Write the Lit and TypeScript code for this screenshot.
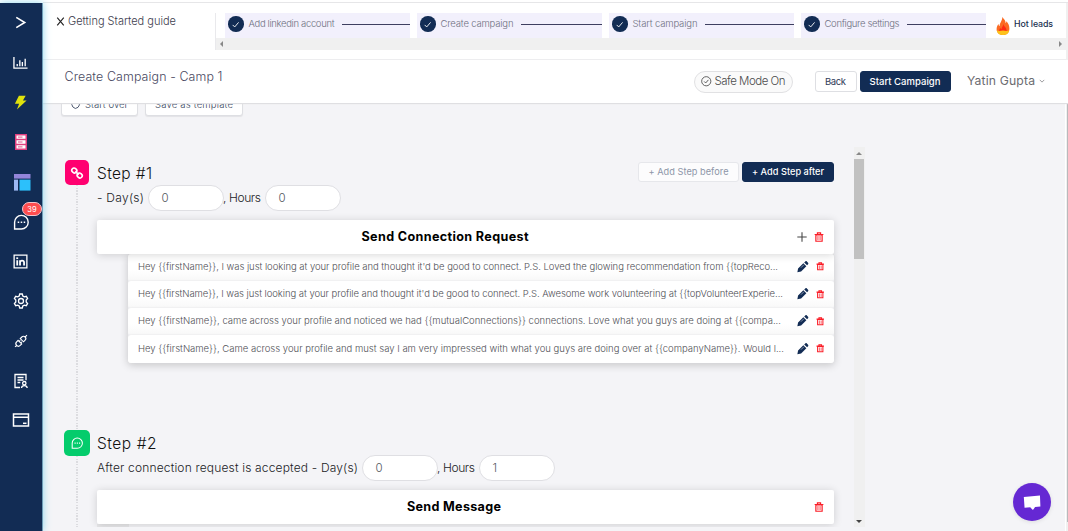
import { LitElement, html, css, svg } from "lit";
import { customElement, property, query } from "lit/decorators.js";

/** One line of text that is tracked in or out to fill a given width. */
@customElement("fit-text")
class FitText extends LitElement {
  static styles = css`
    :host { display: inline-block; flex: none; white-space: pre; line-height: 1; }
    .line { display: inline-block; }
  `;
  @property() text = "";
  @property({ type: Number }) w = 0;
  @query(".line") line!: HTMLElement;

  updated() {
    this.line.style.letterSpacing = "0";
    const natural = this.line.getBoundingClientRect().width;
    const gaps = Math.max(1, this.text.length - 1);
    const tracking = (this.w - natural) / gaps;
    this.line.style.letterSpacing = `${tracking}px`;
    this.line.style.marginRight = `${-tracking}px`;
    this.style.width = `${this.w}px`;
  }

  render() {
    return html`<span class="line">${this.text}</span>`;
  }
}

const t = (text: string, w: number) => html`<fit-text .text=${text} .w=${w}></fit-text>`;

const icons = {
  expand: svg`<path d="M3.500 2.500 12.500 8l-9 5.500" stroke-width="1.700"/>`,
  chart: svg`<path d="M1 2v12h14.5M4.5 12V9.5M7.3 12V5.5M10 12V7.500M13 12V4" stroke-width="1.4"/>`,
  bolt: svg`<path d="M6.300.8h7.2L10.600 5.800h3.900L4.200 15.500 6.500 9.400H2z" fill="#dfe20c" stroke="none"/>`,
  server: svg`<path d="M2 0h12v16H2z" fill="#e0407f" stroke="none"/><path d="M3.500 1.400h9v3.400h-9zM3.500 6.300h9v3.400h-9zM3.500 11.200h9v3.400h-9z" fill="#fff" stroke="none"/><path d="M5 3.100h4.500M5 8h4.500M5 12.900h4.500" stroke="#e0407f" stroke-width=".9"/>`,
  board: svg`<path d="M0 0h16.500v4.600H0z" fill="#9385d9" stroke="none"/><path d="M0 5.600h4v11H0z" fill="#9db9f5" stroke="none"/><path d="M5.500 5.600h11v11h-11z" fill="#2cc0fb" stroke="none"/>`,
  chat: svg`<path d="M1.600 15V8.300A6.800 6.800 0 1 1 8.400 15z" stroke-width="1.400"/><path d="M4.700 8.200h1.500M7.700 8.200h1.500M10.700 8.200h1.500" stroke-width="1.500"/>`,
  linkedin: svg`<path d="M1.200 1.200h13.600v13.600H1.200z" stroke-width="1.400"/><path d="M4.500 6.700v5.600M7.500 12.300V6.700M7.500 9c0-2.600 4.300-2.800 4.300 0v3.300" stroke-width="1.900"/><path d="M3.500 3.600h2v1.800h-2z" fill="currentColor" stroke="none"/>`,
  gear: svg`<path d="M6.700 1h2.600l.5 2 1.500.9 2-.6 1.300 2.200-1.400 1.500v2l1.400 1.500-1.300 2.200-2-.6-1.500.9-.5 2H6.700l-.5-2-1.500-.9-2 .6-1.300-2.200L2.800 9V7L1.400 5.500l1.300-2.200 2 .6L6.200 3z" stroke-width="1.300"/><circle cx="8" cy="8" r="2.500" stroke-width="1.300"/>`,
  plug: svg`<path d="m7.200 5.200 3.700 3.700 1.800-1.800a2.600 2.600 0 0 0-3.700-3.700zM4.700 7.200l4.100 4.100-1.700 1.700a2.800 2.800 0 0 1-4.100-4zM12.800 3.200l2-2M1.200 14.800l1.900-1.900M6 8.500l1.200-1.200M7.800 10.200 9 9" stroke-width="1.300"/>`,
  profile: svg`<path d="M7 14.500H2V1.500h11v5.700M4.500 4.500h6M4.500 7h6M4.500 9.500h2.800M8.500 15c.2-3.200 5.500-3.200 5.700 0" stroke-width="1.300"/><circle cx="11.300" cy="10.200" r="1.700" stroke-width="1.300"/>`,
  card: svg`<path d="M.5 2h15v12H.5zM.5 5.300h15" stroke-width="1.500"/><path d="M10 11.300h3.500" stroke-width="1.500"/>`,
  check: svg`<path d="m4.500 8.500 2.500 2.500 4.800-5.600" stroke-width="1.100"/>`,
  safe: svg`<circle cx="8" cy="8" r="7" stroke-width="1.300"/><path d="m4.800 8.300 2.300 2.300 4.300-4.800" stroke-width="1.400"/>`,
  down: svg`<path d="m2 5 6 6 6-6" stroke-width="1.800"/>`,
  close: svg`<path d="m2.200 1 11.600 14M13.800 1 2.200 15" stroke-width="2"/>`,
  reload: svg`<path d="M4 3.200A6.500 6.500 0 1 0 13 3.800M4.500.500v3.500H1" stroke-width="1.500"/>`,
  link: svg`<g stroke-width="2.100" transform="rotate(43 8 8)"><rect x="-.4" y="5" width="7" height="6" rx="3"/><rect x="9.400" y="5" width="7" height="6" rx="3"/><path d="M4.800 8h6.400"/></g>`,
  plus: svg`<path d="M8 .5v15M.5 8h15" stroke-width="1.700"/>`,
  trash: svg`<path d="M3 4.500h10v10.300H3zM1 4h14M5.500 3.500V1.300h5v2.200" stroke-width="1.900"/><path d="M6.300 6.500v6.500M9.700 6.500v6.500" stroke-width="1.300"/>`,
  pencil: svg`<path d="M.5 15.500l1-5.200 7.300-7.300 4.200 4.200-7.300 7.300zM10 2l1.600-1.400c.6-.6 1.500-.6 2.100 0l1.700 1.700c.6.600.6 1.500 0 2.100L14 6z" fill="currentColor" stroke="none"/><path d="m5.500 9.300 4-4" stroke="#dfe4ee" stroke-width=".8"/>`,
  speech: svg`<path d="M.3 1.800 15.500.500l.4 10.300-5 .4-2 3-2.600-2.600-5.300.4z" fill="#fff" stroke="none"/>`,
};

const icon = (name: keyof typeof icons, cls = "") =>
  html`<svg class="ico ${cls}" viewBox="0 0 16 16" fill="none" stroke="currentColor">${icons[name]}</svg>`;

const flame = html`<svg class="flame" viewBox="0 0 14 18">
  <path d="M6.300 0c2 2.400 3.400 3.700 3.300 6.300.6-.6.8-1.200.8-2C12.500 6.500 13.500 9 13.400 12c-.2 3.800-2.900 6-6.400 6S.6 15.800.6 12.300c0-2.400.8-3.900 2-5.300 0 1.200.3 1.800 1 2.200C3.600 5.500 6.500 3.800 6.300 0z" fill="#fb6a22"/>
  <path d="M7.300 7c.6 2.500 3.300 3.500 3.300 6.800 0 2.700-1.600 4.200-3.600 4.200s-3.800-1.500-3.800-4c0-1.500.5-2.300 1.300-3.300.2 1 .6 1.300 1 1.500C5.500 10 7.300 9.500 7.300 7z" fill="#ff2a12"/>
  <path d="M.8 13.200c2 1.400 4 .2 6.200.2s4 1.200 6.200-.2C12.800 16.500 10.300 18 7 18s-5.800-1.500-6.200-4.800z" fill="#fdc21c"/>
</svg>`;

interface Step {
  label: string; labelW: number; cls: string; icon: keyof typeof icons;
  days: string; daysW: number; d: string; h: string;
  title: string; titleW: number; messages: [string, number][]; actions: boolean;
}

const STEPS: Step[] = [
  {
    label: "Step #1", labelW: 55, cls: "first", icon: "link",
    days: "- Day(s)", daysW: 47, d: "0", h: "0",
    title: "Send Connection Request", titleW: 167, actions: true,
    messages: [
      ["Hey {{firstName}}, I was just looking at your profile and thought it'd be good to connect. P.S. Loved the glowing recommendation from {{topReco...", 640],
      ["Hey {{firstName}}, I was just looking at your profile and thought it'd be good to connect. P.S. Awesome work volunteering at {{topVolunteerExperie...", 645],
      ["Hey {{firstName}}, came across your profile and noticed we had {{mutualConnections}} connections. Love what you guys are doing at {{compa...", 643],
      ["Hey {{firstName}}, Came across your profile and must say I am very impressed with what you guys are doing over at {{companyName}}. Would l...", 646],
    ],
  },
  {
    label: "Step #2", labelW: 59.5, cls: "second", icon: "chat",
    days: "After connection request is accepted - Day(s)", daysW: 261, d: "0", h: "1",
    title: "Send Message", titleW: 94, actions: false, messages: [],
  },
];

@customElement("app-root")
class AppRoot extends LitElement {
  static styles = css`
    :host { display: block; width: 1068px; height: 531px; overflow: hidden; position: relative;
      font-family: Inter, "Open Sans", sans-serif; font-weight: 300; color: #2b2f3a; background: #fff; }
    * { box-sizing: border-box; }
    .ico { display: block; flex: none; width: 14px; height: 14px; overflow: visible; }
    .shell { display: flex; height: 531px; padding-top: 2px; }
    .side { width: 43px; flex: none; margin-top: 1px; background: #122c54; color: #fff; border-right: 1px solid #6d9db8;
      box-shadow: 0 0 8px #8fd8f0; position: relative; z-index: 5; }
    .slot { height: 39.75px; display: flex; align-items: center; justify-content: center; position: relative; padding-right: 1px; }
    .slot .ico { width: 15px; height: 15px; }
    .slot .mid { width: 14px; height: 14px; }
    .slot .big { width: 16px; height: 16px; }
    .slot .tile { margin-left: 2.500px; }
    .badge { position: absolute; left: 22px; top: 0.5px; width: 20px; height: 14px; border-radius: 7px; background: #ff4d4f;
      border: 1px solid #f3c6cd; font-size: 7.500px; font-weight: 400; display: flex; align-items: center; justify-content: center; }
    .page { flex: 1; min-width: 0; display: flex; flex-direction: column; border-top: 1px solid #e6e6e8; }
    .guide { height: 57px; flex: none; display: flex; border-bottom: 1px solid #ededef; }
    .guide-title { width: 172px; height: 36px; flex: none; display: flex; align-items: center; gap: 3.500px; padding-left: 12.500px;
      font-size: 11px; color: #3c3d4d; }
    .guide-title .ico { width: 9px; height: 9px; color: #222; }
    .track { flex: 1; margin-top: 10px; height: 37px; border-left: 1px solid #e9e9ec; margin-right: 2px; }
    .stages { height: 25px; display: flex; gap: 7px; padding-left: 9px; }
    .stage { width: 185px; background: #f2f0fc; display: flex; align-items: center; padding: 0 0 3px 3px; font-size: 9.500px; color: #6f7182; }
    .stage::after { content: ""; flex: 1; height: 1px; background: #3e3f60; margin-left: 7.500px; }
    .tick { width: 15.500px; height: 15.500px; border-radius: 50%; background: #122c54; color: #fff; margin-right: 5px; flex: none; display: flex; align-items: center; justify-content: center; }
    .tick .ico { width: 13px; height: 13px; }
    .hot { display: flex; align-items: center; gap: 4px; padding: 0 0 3px 3px; font-size: 8.800px; font-weight: 500; color: #20304f; }
    .flame { width: 14px; height: 18px; margin-top: 4px; display: block; }
    .hbar { height: 12px; background: #f0f0f0; display: flex; align-items: center; justify-content: space-between; padding: 0 4px; }
    .arr { width: 0; height: 0; border: 3px solid transparent; }
    .arr.l { border-right: 3px solid #888; border-left: 0; }
    .arr.r { border-left: 3px solid #888; border-right: 0; }
    .arr.u { border-bottom: 3px solid #888; border-top: 0; }
    .arr.d { border-top: 3px solid #444; border-bottom: 0; }
    .bar { height: 43px; flex: none; display: flex; align-items: center; padding: 0 23px 0 21.500px; background: #fff;
      position: relative; z-index: 2; box-shadow: 0 1px 1px #dfdfe2; }
    .bar-title { font-size: 12.400px; color: #4a4a62; flex: 1; margin-top: -10px; }
    .pill { height: 22px; width: 99px; border: 1px solid #e1e1e3; border-radius: 11px; background: #fafafa; display: flex; align-items: center;
      gap: 3.500px; padding-left: 5.500px; font-size: 11.500px; color: #4b4b4b; margin-right: 21.500px; }
    .pill .ico { width: 10.500px; height: 10.500px; }
    .btn { height: 21px; border: 1px solid #dedfe3; border-radius: 3px; background: #fff; display: flex; align-items: center; justify-content: center;
      font-size: 9.500px; color: #2f3c58; font-weight: 400; flex: none; }
    .navy { background: #122c54; border-color: #122c54; color: #fff; font-weight: 500; }
    .back { width: 42px; margin-right: 3px; }
    .start { width: 91px; margin-right: 16.500px; }
    .user { display: flex; align-items: center; gap: 4px; font-size: 12.200px; font-weight: 400; color: #6b6b70; }
    .user .ico { width: 6px; height: 6px; }
    .body { flex: 1; min-height: 0; overflow: hidden; background: #f4f4f7; padding-left: 18px; margin-right: 3px; }
    .tools { display: flex; gap: 7px; margin-top: -10px; height: 54px; }
    .tools .btn { height: 23px; box-shadow: 0 1px 1px #e3e3e6; font-weight: 300; }
    .over { width: 77px; gap: 5px; }
    .over .ico { width: 9px; height: 9px; }
    .tmpl { width: 98px; }
    .view { display: flex; height: 380px; width: 804px; }
    .steps { width: 793px; overflow: hidden; padding: 12px 20px 0 3px; }
    .step { display: flex; height: 270px; }
    .rail { width: 26px; margin-right: 7px; flex: none; display: flex; flex-direction: column; align-items: center; }
    .rail::after { content: ""; flex: 1; width: 2px; margin-left: -1px;
      background: repeating-linear-gradient(#dcdce0 0 1.400px, transparent 1.400px 2.700px); }
    .kind { width: 24px; height: 25px; border-radius: 5px; color: #fff; display: flex; align-items: center; justify-content: center; flex: none; margin-top: 1px; }
    .first .kind { background: #ff0070; }
    .second .kind { background: #04cc6c; height: 26.500px; width: 25.500px; margin-top: 0.500px; }
    .kind .ico { width: 12px; height: 12px; }
    .main { flex: 1; min-width: 0; }
    .head { height: 26px; display: flex; align-items: center; gap: 3px; padding-top: 2px; }
    .name { font-size: 15.500px; color: #111; flex: 1; }
    .head .btn { height: 20px; margin-top: -3px; font-size: 9.200px; }
    .head .before { width: 101px; color: #8d96a8; background: #fcfcfd; border-color: #e6e7eb; }
    .after { width: 92px; }
    .delay { display: flex; height: 26px; align-items: center; font-size: 12px; color: #1b1b1f; }
    .num { width: 76px; height: 26px; border: 1px solid #dfdfe3; border-radius: 13px; background: #fff; padding-left: 13px; margin-left: 3.500px;
      display: flex; align-items: center; font-size: 11.500px; color: #55585f; }
    .num + fit-text { margin-left: -0.500px; }
    .card { margin-top: 9px; height: 33.500px; background: #fff; border-radius: 2px; box-shadow: 0 1px 8px rgba(0,0,0,.16); display: flex; align-items: center;
      position: relative; z-index: 1; padding-right: 10px; font-size: 12.600px; font-weight: 700; color: #000; }
    .ttl { flex: 1; display: flex; justify-content: center; padding-top: 1.500px; }
    .second .ttl { margin-left: 18px; }
    .card .acts { display: flex; align-items: center; gap: 7px; width: 31px; justify-content: flex-end; flex: none; }
    .red { color: #fa1c26; }
    .card .ico { width: 10px; height: 10px; }
    .card .plus { color: #444; }
    .msgs { margin-left: 31px; box-shadow: 0 2px 9px rgba(0,0,0,.2); border-radius: 3px; }
    .msg { height: 27.250px; background: linear-gradient(#fff 60%, #f8f8f8); border-radius: 3px; box-shadow: 0 0 2px #dedee0; display: flex; align-items: center;
      padding: 0 10px 1px; font-size: 9.500px; color: #4f5056; }
    .msg:last-child { background: #fff; }
    .msg .ico { width: 8.500px; height: 8.500px; }
    .msg .pen { margin-left: auto; width: 11.500px; height: 11.500px; color: #122c54; margin-right: 7px; }
    .stub { height: 10px; background: #e8e8ea; width: 32px; }
    .vbar { width: 10.500px; background: #f0f0f0; display: flex; flex-direction: column; align-items: center; padding: 5px 0 4px; }
    .thumb { width: 10px; height: 100px; background: #c1c1c1; margin: 4px 0 auto; }
    .edge { position: absolute; right: 0; top: 3px; width: 2px; height: 528px; background: #f0f0f0; }
    .edge-thumb { height: 434px; margin-top: 85px; background: #b9b9bc; width: 1px; margin-left: 1px; }
    .help { position: absolute; left: 1013px; top: 483px; width: 38px; height: 38px; border-radius: 50%; background: #6528d3; display: flex;
      align-items: center; justify-content: center; z-index: 6; box-shadow: 0 1px 4px rgba(0,0,0,.1); }
    .help .ico { width: 18px; height: 17px; margin-top: 2px; margin-left: -1px; }
  `;

  private renderStep(s: Step) {
    return html`<section class="step ${s.cls}">
      <div class="rail"><div class="kind">${icon(s.icon)}</div></div>
      <div class="main">
        <div class="head">
          <div class="name">${t(s.label, s.labelW)}</div>
          ${s.actions ? html`
            <div class="btn before">${t("+ Add Step before", 80)}</div>
            <div class="btn navy after">${t("+ Add Step after", 72)}</div>` : ""}
        </div>
        <div class="delay">${t(s.days, s.daysW)}<div class="num">${s.d}</div>${t(", Hours", 38)}<div class="num">${s.h}</div></div>
        <div class="card">
          <div class="ttl">${t(s.title, s.titleW)}</div>
          <div class="acts">${s.actions ? icon("plus", "plus") : ""}${icon("trash", "red")}</div>
        </div>
        ${s.messages.length ? html`<div class="msgs">
          ${s.messages.map(([m, w]) => html`<div class="msg">${t(m, w)}${icon("pencil", "pen")}${icon("trash", "red")}</div>`)}
        </div>` : html`<div class="stub"></div>`}
      </div>
    </section>`;
  }

  render() {
    const stages: [string, number][] = [["Add linkedin account", 86], ["Create campaign", 73], ["Start campaign", 65], ["Configure settings", 75]];
    return html`
      <div class="shell">
        <nav class="side">
          <div class="slot">${icon("expand")}</div>
          <div class="slot">${icon("chart")}</div>
          <div class="slot">${icon("bolt")}</div>
          <div class="slot">${icon("server", "big")}</div>
          <div class="slot">${icon("board", "big tile")}</div>
          <div class="slot">${icon("chat", "big")}<span class="badge">39</span></div>
          <div class="slot">${icon("linkedin")}</div>
          <div class="slot">${icon("gear", "big")}</div>
          <div class="slot">${icon("plug", "mid")}</div>
          <div class="slot">${icon("profile", "big")}</div>
          <div class="slot">${icon("card", "big")}</div>
        </nav>
        <div class="page">
          <div class="guide">
            <div class="guide-title">${icon("close")}${t("Getting Started guide", 108)}</div>
            <div class="track">
              <div class="stages">
                ${stages.map(([s, w]) => html`<div class="stage"><span class="tick">${icon("check")}</span>${t(s, w)}</div>`)}
                <div class="hot">${flame}${t("Hot leads", 39)}</div>
              </div>
              <div class="hbar"><i class="arr l"></i><i class="arr r"></i></div>
            </div>
          </div>
          <div class="bar">
            <div class="bar-title">${t("Create Campaign - Camp 1", 158)}</div>
            <div class="pill">${icon("safe")}${t("Safe Mode On", 71)}</div>
            <div class="btn back">${t("Back", 21)}</div>
            <div class="btn navy start">${t("Start Campaign", 71)}</div>
            <div class="user">${t("Yatin Gupta", 68)}${icon("down")}</div>
          </div>
          <div class="body">
            <div class="tools">
              <div class="btn over">${icon("reload")}${t("Start over", 43)}</div>
              <div class="btn tmpl">${t("Save as template", 78)}</div>
            </div>
            <div class="view">
              <div class="steps">${STEPS.map((s) => this.renderStep(s))}</div>
              <div class="vbar"><i class="arr u"></i><div class="thumb"></div><i class="arr d"></i></div>
            </div>
          </div>
        </div>
      </div>
      <div class="edge"><div class="edge-thumb"></div></div>
      <div class="help">${icon("speech")}</div>`;
  }
}
